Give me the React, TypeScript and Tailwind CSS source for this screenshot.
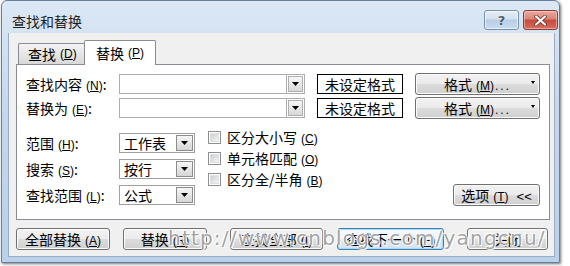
import React from "react";

const Acc = ({ k }: { k: string }) => (
  <span className="font-['Liberation_Sans',sans-serif] text-[12px] ml-[4px]">
    (<span className="underline underline-offset-[1px]">{k}</span>)
  </span>
);

const Tri = ({ w = 7 }: { w?: number }) => (
  <svg width={w} height={4} viewBox="0 0 7 4" className="block">
    <path d="M0 0 H7 L3.5 4 Z" fill="#000" />
  </svg>
);

const btnBase =
  "h-[22px] flex items-center justify-center rounded-[3px] border border-[#707070] shadow-[inset_0_0_0_1px_#fbfbfb] bg-[linear-gradient(#f2f2f2_0%,#ebebeb_50%,#dddddd_50%,#cfcfcf_100%)] leading-none";

function ComboInput() {
  return (
    <div className="flex h-[20px]">
      <div className="w-[168px] h-full bg-white border border-[#abadb3]" />
      <div className="w-[18px] h-full border border-l-0 border-[#abadb3] bg-white p-[1px]">
        <div className="w-full h-full flex items-center justify-center bg-[linear-gradient(#f7f7f7,#d8d8d8)] border border-[#b0b0b0]">
          <Tri />
        </div>
      </div>
    </div>
  );
}

function Select({ text }: { text: string }) {
  return (
    <div className="flex w-[76px] h-[20px] bg-white border border-[#a0a0a0]">
      <div className="flex-1 pl-[4px] flex items-center leading-none">{text}</div>
      <div className="w-[19px] h-full p-[1px]">
        <div className="w-full h-full flex items-center justify-center bg-[linear-gradient(#f6f6f6,#d6d6d6)] border border-[#8c8c8c]">
          <Tri />
        </div>
      </div>
    </div>
  );
}

function Check({ label, k }: { label: string; k: string }) {
  return (
    <div className="flex items-center h-[21px]">
      <div className="w-[13px] h-[13px] border border-[#8e8f8f] bg-white p-[1px]">
        <div className="w-full h-full bg-[linear-gradient(135deg,#cbcfd5,#f4f4f4)] border border-[#e0e0e0]" />
      </div>
      <div className="ml-[6px] leading-none">
        {label}
        <Acc k={k} />
      </div>
    </div>
  );
}

function FormatBtn() {
  return (
    <div className={`${btnBase} ml-[12px] w-[125px] h-[18px] relative`}>
      <span>
        格式<Acc k="M" />
        <span className="font-['Liberation_Sans',sans-serif] text-[12px] tracking-[2px] ml-[1px]">...</span>
      </span>
      <span className="absolute right-[4px] top-[7px]">
        <svg width="4" height="3" viewBox="0 0 4 3" className="block">
          <path d="M0 0 H4 L2 3 Z" fill="#000" />
        </svg>
      </span>
    </div>
  );
}

export default function App() {
  return (
    <div className="relative w-[570px] h-[266px] bg-white overflow-hidden font-['Noto_Sans_CJK_SC',sans-serif] text-[14px] text-black">
      <div className="ml-[1px] w-[559px] h-[263px] flex flex-col border border-[#6a7f99] rounded-t-[6px] bg-[linear-gradient(#dce8f5,#c4d8ee_40%,#b9d1ea)] shadow-[1px_1px_3px_rgba(0,0,0,0.55)]">
        {/* title bar */}
        <div className="h-[32px] flex items-start shrink-0">
          <div className="ml-[10px] mt-[12px] leading-[16px] text-[14px] text-[#1e1e1e]">查找和替换</div>
          <div className="ml-auto mt-[9px] mr-[1px] flex gap-[4px]">
            <div className="w-[35px] h-[20px] rounded-[3px] border border-[#7b8fab] shadow-[inset_0_0_0_1px_rgba(255,255,255,0.6)] bg-[linear-gradient(#e6eef8_0%,#d3e0ef_45%,#b8cde6_50%,#c9dbef_100%)] flex items-center justify-center">
              <span className="font-['DejaVu_Sans',sans-serif] font-bold text-[13px] leading-none text-[#4d5c70] [text-shadow:0_0_2px_white]">?</span>
            </div>
            <div className="w-[35px] h-[20px] rounded-[3px] border border-[#8e3b33] shadow-[inset_0_0_0_1px_rgba(255,220,210,0.5)] bg-[linear-gradient(#e9a99f_0%,#d98478_45%,#c64a3c_50%,#d2705f_100%)] flex items-center justify-center">
              <svg width="13" height="11" viewBox="0 0 13 11">
                <path d="M2 1.5 L11 9.5 M11 1.5 L2 9.5" stroke="#6a2a22" strokeWidth="3.6" strokeLinecap="round" />
                <path d="M2 1.5 L11 9.5 M11 1.5 L2 9.5" stroke="#ffffff" strokeWidth="2.2" strokeLinecap="round" />
              </svg>
            </div>
          </div>
        </div>

        {/* client */}
        <div className="ml-[6px] mr-[4px] mb-[5px] flex-1 bg-[#f0f0f0] border border-[#9aabc2] border-t-0 flex flex-col">
          {/* tabs */}
          <div className="mt-[7px] ml-[8px] h-[25px] -mb-[1px] flex items-end relative z-10">
            <div className="ml-[1px] w-[66px] h-[21px] mb-[1px] border border-r-0 border-b-0 border-[#898c95] rounded-tl-[2px] bg-[linear-gradient(#f3f3f3,#e6e6e6_50%,#d8d8d8)] flex items-center pl-[9px] leading-none">
              查找<Acc k="D" />
            </div>
            <div className="w-[72px] h-[25px] border border-b-0 border-[#898c95] rounded-t-[2px] bg-white flex items-center pl-[11px] pb-[1px] leading-none">
              替换<Acc k="P" />
            </div>
          </div>

          {/* panel */}
          <div className="ml-[7px] w-[534px] h-[156px] border border-[#898c95] bg-white px-[9px] pt-[9px] flex flex-col">
            {/* row 1 */}
            <div className="flex items-center h-[20px]">
              <div className="w-[93px] leading-none">
                查找内容<Acc k="N" />:
              </div>
              <ComboInput />
              <div className="ml-[12px] w-[86px] h-[20px] border border-black flex items-center justify-center leading-none">未设定格式</div>
              <FormatBtn />
            </div>
            {/* row 2 */}
            <div className="flex items-center h-[20px] mt-[4px]">
              <div className="w-[93px] leading-none">
                替换为<Acc k="E" />:
              </div>
              <ComboInput />
              <div className="ml-[12px] w-[86px] h-[20px] border border-black flex items-center justify-center leading-none">未设定格式</div>
              <FormatBtn />
            </div>

            {/* lower section */}
            <div className="mt-[13px] h-[75px] flex">
              <div className="pt-[2px] flex flex-col gap-[6px]">
                <div className="flex items-center">
                  <div className="w-[93px] leading-none">
                    范围<Acc k="H" />:
                  </div>
                  <Select text="工作表" />
                </div>
                <div className="flex items-center">
                  <div className="w-[93px] leading-none">
                    搜索<Acc k="S" />:
                  </div>
                  <Select text="按行" />
                </div>
                <div className="flex items-center">
                  <div className="w-[93px] leading-none">
                    查找范围<Acc k="L" />:
                  </div>
                  <Select text="公式" />
                </div>
              </div>
              <div className="ml-[13px] -mt-[4px] flex flex-col">
                <Check label="区分大小写" k="C" />
                <Check label="单元格匹配" k="O" />
                <Check label="区分全/半角" k="B" />
              </div>
              <div className={`${btnBase} ml-auto self-end w-[87px]`}>
                <span>
                  选项<Acc k="T" />
                  <span className="font-['Liberation_Sans',sans-serif] text-[13px] ml-[8px]">&lt;&lt;</span>
                </span>
              </div>
            </div>
          </div>

          {/* bottom buttons */}
          <div className="mt-[8px] ml-[7px] flex">
            <div className={`${btnBase} w-[94px]`}>
              <span>全部替换<Acc k="A" /></span>
            </div>
            <div className={`${btnBase} ml-[13px] w-[84px]`}>
              <span>替换<Acc k="R" /></span>
            </div>
            <div className={`${btnBase} ml-[23px] w-[93px]`}>
              <span>查找全部<Acc k="I" /></span>
            </div>
            <div className="ml-[14px] w-[107px] h-[22px] flex items-center justify-center rounded-[3px] border border-[#3c7fb1] shadow-[inset_0_0_0_1px_#a6dbf7] bg-[linear-gradient(#f4f9fd_0%,#eaf4fb_50%,#dde9f3_50%,#d3e3f0_100%)] leading-none">
              <span>查找下一个<Acc k="F" /></span>
            </div>
            <div className={`${btnBase} ml-[23px] w-[81px]`}>
              <span>关闭</span>
            </div>
          </div>
        </div>
      </div>

      {/* watermark */}
      <div className="absolute left-[168px] top-[226px] font-['DejaVu_Sans',sans-serif] text-[20px] tracking-[1.2px] leading-[24px] text-[rgba(145,145,145,0.85)] [text-shadow:0_0_1px_#fff,0_0_2px_#fff,1px_1px_1px_#fff,-1px_-1px_1px_#fff] whitespace-nowrap pointer-events-none">
        http://www.cnblogs.com/yangcnu/
      </div>
    </div>
  );
}
